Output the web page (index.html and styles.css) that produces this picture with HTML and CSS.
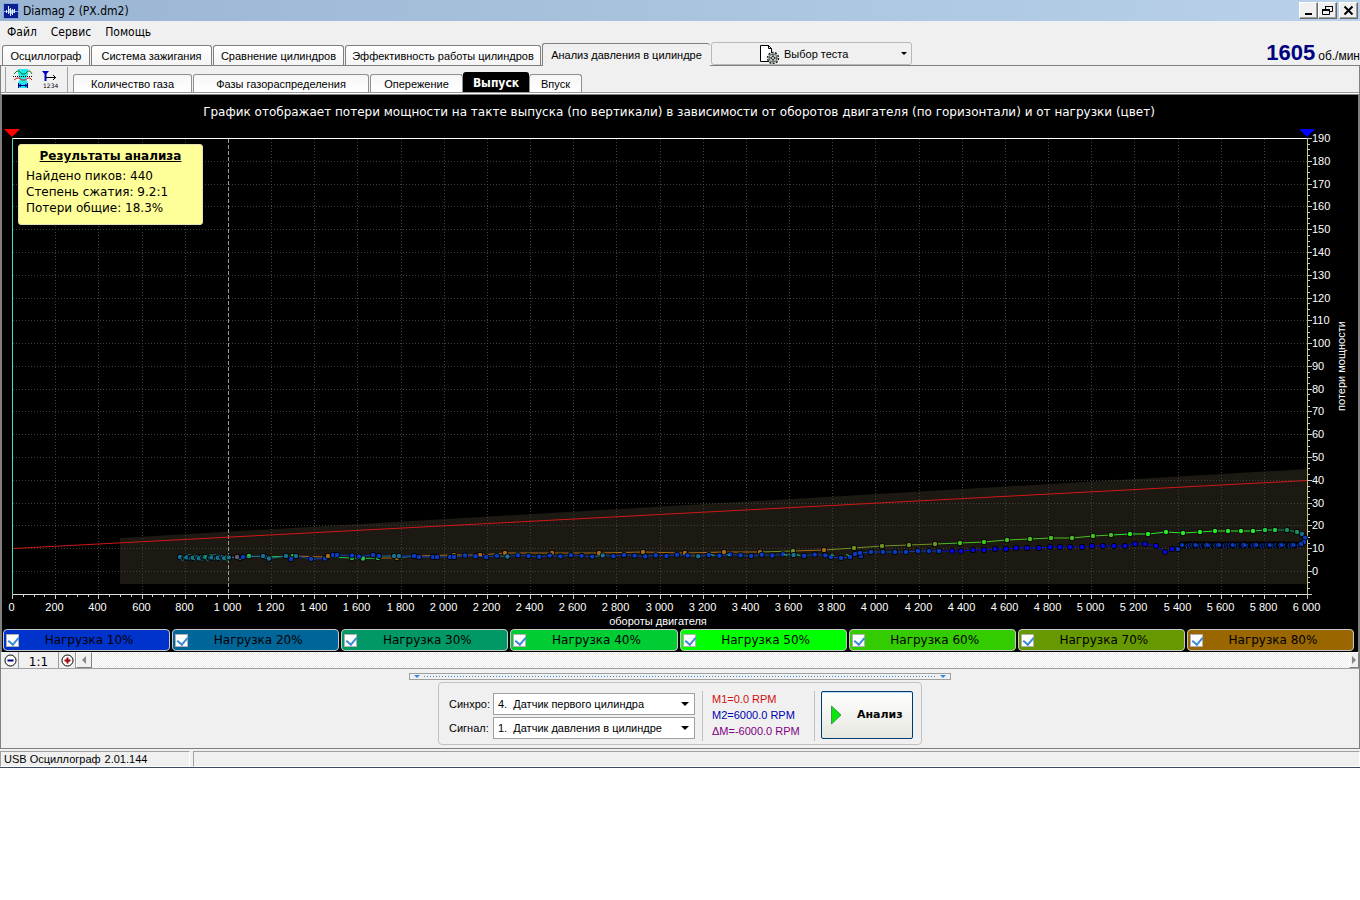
FILE: index.html
```html
<!DOCTYPE html>
<html lang="ru">
<head>
<meta charset="utf-8">
<title>Diamag 2 (PX.dm2)</title>
<link rel="stylesheet" href="styles.css">
</head>
<body>
<div class="window">
  <header class="titlebar">
    <svg class="app-icon" width="16" height="16" viewBox="0 0 16 16"><rect width="16" height="16" fill="#7fa4dc"/><rect x="1" y="1" width="14" height="14" fill="#0b1f92"/><path d="M1 8.500h14" stroke="#7fb0ee"/><path d="M3.500 7v3M5.500 3v8M7.500 5v8M9.500 6v6M11.500 6v4" stroke="#e4f0ff"/><path d="M6.500 6v4M8.500 7v4M10.500 7v3" stroke="#8fb8f0"/></svg>
    <h1 class="title">Diamag 2 (PX.dm2)</h1>
    <div class="win-buttons">
      <button class="win-btn" aria-label="Свернуть"><svg width="13" height="13" viewBox="0 0 13 13"><path d="M3 10h7" stroke="#000" stroke-width="2"/></svg></button>
      <button class="win-btn" aria-label="Восстановить"><svg width="13" height="13" viewBox="0 0 13 13"><path d="M4.500 5V2.500h7v5H9M4 2.500h8M1.500 5.500h7v5h-7zM1 5.500h8M1 6.500h8" fill="none" stroke="#000"/></svg></button>
      <button class="win-btn win-close" aria-label="Закрыть"><svg width="13" height="13" viewBox="0 0 13 13"><path d="M2.500 2.500l8 8m0-8l-8 8" stroke="#000" stroke-width="2"/></svg></button>
    </div>
  </header>
  <nav class="menu">
    <a href="#">Файл</a><a href="#">Сервис</a><a href="#">Помощь</a>
  </nav>
  <div class="tabs">
    <button class="tab tab-scope">Осциллограф</button>
    <button class="tab tab-ignition">Система зажигания</button>
    <button class="tab tab-compare">Сравнение цилиндров</button>
    <button class="tab tab-effect">Эффективность работы цилиндров</button>
    <button class="tab tab-pressure selected">Анализ давления в цилиндре</button>
    <button class="test-select">
      <svg width="21" height="20" viewBox="0 0 21 20"><path d="M1.500 1.500h8l3 3v13h-11z" fill="#fff" stroke="#000"/><path d="M9.500 1.500v3h3" fill="none" stroke="#000"/><circle cx="14" cy="14" r="5.500" fill="#c9d2c9" stroke="#222" stroke-width="1.500" stroke-dasharray="2 1.400"/><circle cx="14" cy="14" r="4" fill="#c9d2c9" stroke="#67786f"/><circle cx="14" cy="14" r="1.500" fill="#fff" stroke="#222"/><path d="M14 10v2m0 4v2m-4-4h2m4 0h2" stroke="#333"/></svg>
      <span>Выбор теста</span><i class="caret"></i>
    </button>
    <div class="rpm"><strong>1605</strong><span>об./мин</span></div>
  </div>

  <main class="page">
    <div class="subbar">
      <div class="tools">
        <button class="tool" aria-label="Фазы"><svg width="20" height="20" viewBox="0 0 20 20"><path d="M5 0h10v5l-2 5 2 4v5H5v-5l2-4-2-5z" fill="#20e8e8"/><path d="M1 5l3-3h2l3 3h3l3-3h2l2 3" fill="none" stroke="#137a20"/><path d="M1 11l3-2h2l3 2h3l3-2h2l2 2" fill="none" stroke="#d21a1a"/><path d="M0 7.500h20" stroke="#000" stroke-dasharray="1 1"/><path d="M5.500 14v5M14.500 14v5M6 16.500h8M8 15l-2 1.500L8 18M12 15l2 1.500-2 1.500" fill="none" stroke="#000090"/></svg></button>
        <button class="tool" aria-label="Нумерация"><svg width="18" height="20" viewBox="0 0 18 20"><path d="M1 2h7L5.500 5v7h-2V5z" fill="#0000c8"/><path d="M5 8.500h10M12 6l2.500 2.500L12 11" fill="none" stroke="#000"/><text class="tool-digits" x="2" y="19">1234</text></svg></button>
      </div>
      <button class="subtab sub-gas">Количество газа</button>
      <button class="subtab sub-phase">Фазы газораспределения</button>
      <button class="subtab sub-advance">Опережение</button>
      <button class="subtab sub-exhaust active">Выпуск</button>
      <button class="subtab sub-intake">Впуск</button>
    </div>

    <section class="plot">
      <svg id="chart" class="chart" viewBox="2 95 1356 533" role="img" aria-label="Потери мощности от оборотов двигателя"></svg>
      <aside class="results">
        <h2>Результаты анализа</h2>
        <p>Найдено пиков: 440</p>
        <p>Степень сжатия: 9.2:1</p>
        <p>Потери общие: 18.3%</p>
      </aside>
      <div class="legend">
        <label class="load l10"><input type="checkbox" checked><span>Нагрузка 10%</span></label>
        <label class="load l20"><input type="checkbox" checked><span>Нагрузка 20%</span></label>
        <label class="load l30"><input type="checkbox" checked><span>Нагрузка 30%</span></label>
        <label class="load l40"><input type="checkbox" checked><span>Нагрузка 40%</span></label>
        <label class="load l50"><input type="checkbox" checked><span>Нагрузка 50%</span></label>
        <label class="load l60"><input type="checkbox" checked><span>Нагрузка 60%</span></label>
        <label class="load l70"><input type="checkbox" checked><span>Нагрузка 70%</span></label>
        <label class="load l80"><input type="checkbox" checked><span>Нагрузка 80%</span></label>
      </div>
    </section>

    <div class="zoombar">
      <button class="zoom-btn" aria-label="Уменьшить"><svg width="13" height="13" viewBox="0 0 13 13"><circle cx="6.500" cy="6.500" r="5.500" fill="#fff" stroke="#000"/><path d="M3.500 6.500h6" stroke="#000080" stroke-width="2"/></svg></button>
      <button class="zoom-reset">1:1</button>
      <button class="zoom-btn" aria-label="Увеличить"><svg width="13" height="13" viewBox="0 0 13 13"><circle cx="6.500" cy="6.500" r="5.500" fill="#fff" stroke="#000"/><path d="M3.500 6.500h6M6.500 3.500v6" stroke="#a00000" stroke-width="2"/></svg></button>
      <button class="scroll-btn" aria-label="Влево"><svg width="6" height="8" viewBox="0 0 6 8"><path d="M5 0v8L1 4z" fill="#888"/></svg></button>
      <div class="track"></div>
      <button class="scroll-btn scroll-right" aria-label="Вправо"><svg width="4" height="8" viewBox="0 0 4 8"><path d="M0 0v8l4-4z" fill="#888"/></svg></button>
    </div>

    <div class="bottom">
      <div class="splitter"><i class="mini"></i><i class="dots"></i><i class="mini"></i></div>
      <form class="panel">
        <div class="fields">
          <label for="sync">Синхро:</label>
          <div class="combo"><select id="sync"><option>4.&nbsp; Датчик первого цилиндра</option></select><i class="caret"></i></div>
          <label for="signal">Сигнал:</label>
          <div class="combo"><select id="signal"><option>1.&nbsp; Датчик давления в цилиндре</option></select><i class="caret"></i></div>
        </div>
        <div class="marks">
          <span class="m1">M1=0.0 RPM</span>
          <span class="m2">M2=6000.0 RPM</span>
          <span class="dm">ΔM=-6000.0 RPM</span>
        </div>
        <button type="button" class="analyze"><svg width="11" height="20" viewBox="0 0 11 20"><path d="M.500 1l9.500 9-9.500 9z" fill="#0be50b" stroke="#3a9a4a"/></svg><span>Анализ</span></button>
      </form>
    </div>
  </main>
  <footer class="status"><div class="cell version"><span>USB Осциллограф</span><span>2.01.144</span></div><div class="cell rest"></div></footer>
</div>
<script src="chart.js"></script>
</body>
</html>
```
FILE: styles.css
```css
* { box-sizing: border-box; }
body { margin: 0; background: #fff; color: #000; font: 11px/14px "Liberation Sans", Arial, sans-serif; }
button, select { font: inherit; color: inherit; margin: 0; padding: 0; border-radius: 0; }
svg { display: block; flex: none; }
.window { background: #f0f0f0; border-bottom: 1px solid #3c4a60; overflow: hidden; }

.titlebar { display: flex; align-items: center; height: 21px; padding: 0 2px 0 3px; background: linear-gradient(90deg, #9ab5d3, #b9d1ea); }
.title { flex: 1; margin: 0 0 0 4px; font: 12px/16px "DejaVu Sans Condensed", "DejaVu Sans", sans-serif; }
.win-buttons { display: flex; }
.win-btn { display: grid; place-items: center; width: 19px; height: 17px; background: #f0f0f0; border: 1px solid; border-color: #fff #696969 #696969 #fff; box-shadow: inset -1px -1px #a0a0a0; }
.win-close { margin-left: 2px; }

.menu { display: flex; gap: 14px; height: 22px; padding: 0 7px; align-items: center; font: 12px/16px "DejaVu Sans Condensed", "DejaVu Sans", sans-serif; }
.menu a { color: #000; text-decoration: none; }

.tabs { display: flex; align-items: flex-end; height: 22px; padding-left: 2px; gap: 1px; }
.tab { height: 20px; background: linear-gradient(#fff, #f4f4f4); border: 1px solid #808080; border-bottom: 0; border-radius: 3px 3px 0 0; white-space: nowrap; }
.tab-scope { width: 88px; }
.tab-ignition { width: 121px; }
.tab-compare { width: 131px; }
.tab-effect { width: 196px; }
.tab-pressure { width: 168px; }
.tab.selected { height: 23px; margin-bottom: -1px; background: #f0f0f0; border-right: 0; position: relative; z-index: 1; }
.test-select { display: flex; align-items: center; width: 201px; height: 23px; padding: 0 4px 0 47px; gap: 4px; background: #f0f0f0; border: 1px solid #b8b8b8; border-radius: 3px; }
.caret { margin-left: auto; width: 0; height: 0; border: 3px solid transparent; border-top: 3px solid #000; border-bottom: 0; }
.rpm { display: flex; align-items: baseline; gap: 3px; height: 22px; margin-left: auto; font-size: 12px; line-height: 20px; white-space: nowrap; }
.rpm strong { font-size: 22px; color: #000080; }

.page { border: 1px solid #808080; }
.subbar { display: flex; align-items: flex-end; height: 29px; padding-left: 4px; border-bottom: 1px solid #808080; background: linear-gradient(#f0f0f0 26px, #999 26px, #999 27px, #fff 27px); padding-bottom: 2px; }
.tools { display: flex; gap: 8px; align-items: flex-start; width: 63px; height: 25px; margin-right: 5px; padding: 2px 0 0 7px; border: solid #a0a0a0; border-width: 0 1px; }
.tool { border: 0; background: none; }
.tool-digits { font: 6px "DejaVu Sans", sans-serif; }
.subtab { height: 18px; margin-right: 1px; background: linear-gradient(#f6f6f6, #fff); border: 1px solid #909090; border-bottom: 0; border-radius: 3px 3px 0 0; white-space: nowrap; }
.sub-gas { width: 119px; }
.sub-phase { width: 176px; }
.sub-advance { width: 93px; margin-right: 0; }
.sub-exhaust { width: 66px; margin-right: 0; }
.sub-intake { width: 53px; }
.subtab.active { height: 20px; background: #000; color: #fff; border-color: #000; font: bold 12px/16px "DejaVu Sans Condensed", sans-serif; }

.plot { position: relative; background: #000; border-left: 1px solid #808080; border-right: 1px solid #808080; padding-bottom: 1px; }
.chart { width: 100%; height: auto; }
.chart text { fill: #fff; font: 11px "Liberation Sans", sans-serif; }
.chart .chart-title { font: 12px "DejaVu Sans", sans-serif; }
.mid { text-anchor: middle; }
.grid { stroke: #404040; stroke-dasharray: 1 2; }
.results { position: absolute; left: 16px; top: 49px; width: 185px; height: 81px; padding: 3px 7px; background: #ffff99; border: 1px solid #e4e4b0; border-radius: 3px; font: 12px/16px "DejaVu Sans", sans-serif; white-space: nowrap; }
.results h2 { margin: 0 0 4px; font-size: 12px; line-height: 16px; text-align: center; text-decoration: underline; }
.results p { margin: 0; }
.legend { display: grid; grid-template-columns: repeat(8, 1fr); gap: 2px; padding: 1px 4px 0 1px; }
.load { display: flex; align-items: center; height: 22px; padding: 0 10px 0 2px; border: 1px solid #c8c8c8; border-radius: 4px; font: 12px/16px "DejaVu Sans", sans-serif; }
.load span { flex: 1; text-align: center; white-space: nowrap; }
.load input { appearance: none; position: relative; width: 13px; height: 13px; margin: 0; background: #fff; border: 1px solid #b0b0b0; }
.load input:checked::after { content: ""; position: absolute; left: 3px; top: 0; width: 5px; height: 8px; border: solid #3a8ad8; border-width: 0 2px 2px 0; transform: rotate(40deg); }
.l10 { background: #0033cc; }
.l20 { background: #006699; }
.l30 { background: #009966; }
.l40 { background: #00cc33; }
.l50 { background: #00ff00; }
.l60 { background: #33cc00; }
.l70 { background: #669900; }
.l80 { background: #996600; }

.zoombar { display: flex; height: 17px; border-bottom: 1px solid #a0a0a0; padding-left: 1px; }
.zoom-btn { display: grid; place-items: center; width: 17px; background: #f0f0f0; border: solid #999; border-width: 0 1px 0 0; }
.zoom-reset { width: 40px; background: #f0f0f0; border: solid #999; border-width: 0 1px 0 0; font: 12px/16px "DejaVu Sans", sans-serif; padding-top: 2px; }
.scroll-btn { display: grid; place-items: center; width: 16px; background: #f0f0f0; border: 1px solid; border-color: #fff #808080 #808080 #fff; }
.scroll-right { width: 10px; }
.track { flex: 1; background: repeating-conic-gradient(#ececec 0 25%, #fff 0 50%) 0 0 / 2px 2px; }

.bottom { display: flex; flex-direction: column; align-items: center; gap: 2px; padding: 4px 0 3px; }
.splitter { display: flex; align-items: center; gap: 4px; width: 542px; height: 7px; padding: 0 4px; border: 1px solid #a0a0a0; }
.mini { border: 3px solid transparent; border-top-color: #3a8ad8; border-bottom: 0; }
.dots { flex: 1; height: 1px; background: repeating-linear-gradient(90deg, #3a8ad8 0 1px, transparent 1px 3px); }
.panel { display: flex; align-items: center; width: 484px; height: 63px; padding: 4px 8px 0 10px; border: 1px solid #c0c0c0; border-radius: 4px; }
.fields { display: grid; grid-template-columns: 44px 202px; row-gap: 2px; align-items: center; }
.combo { position: relative; height: 22px; }
.combo select { appearance: none; width: 100%; height: 22px; padding: 0 20px 0 4px; background: #fff; border: 1px solid #a0a0a0; }
.combo .caret { position: absolute; right: 6px; top: 9px; border-width: 4px 4px 0; pointer-events: none; }
.marks { display: flex; flex-direction: column; width: 113px; height: 50px; margin-left: 7px; padding-left: 9px; border: solid #c0c0c0; border-width: 0 1px; line-height: 16px; white-space: nowrap; }
.m1 { color: #d01010; }
.m2 { color: #0000b0; }
.dm { color: #800080; }
.analyze { display: flex; align-items: center; gap: 15px; width: 92px; height: 48px; margin: 0 0 2px auto; padding-left: 9px; border: 1px solid #003c74; border-radius: 2px; background: linear-gradient(#fff, #e6e6e0); box-shadow: inset 0 1px #bcd8f4; font: bold 11px/14px "DejaVu Sans", sans-serif; }

.status { display: flex; gap: 3px; height: 18px; padding-top: 2px; }
.cell { border: 1px solid; border-color: #a0a0a0 #fff #fff #a0a0a0; }
.version { display: flex; gap: 4px; width: 190px; padding-left: 3px; align-items: center; white-space: nowrap; }
.rest { flex: 1; }
```
FILE: chart.js
```js
const svg = document.getElementById('chart');
const out = [];
const X = v => Math.round(12 + v * 1295 / 6000) + 0.5;
const Y = v => Math.round(571 - v * 433 / 190) + 0.5;
const line = (x1, y1, x2, y2, stroke, extra = '') =>
  out.push(`<line x1="${x1}" y1="${y1}" x2="${x2}" y2="${y2}" stroke="${stroke}" ${extra}/>`);
const text = (x, y, s, cls = '', extra = '') =>
  out.push(`<text x="${x}" y="${y}" class="${cls}" ${extra}>${s}</text>`);

text(679, 116, 'График отображает потери мощности на такте выпуска (по вертикали) в зависимости от оборотов двигателя (по горизонтали) и от нагрузки (цвет)', 'chart-title mid');

// Tolerance band
out.push('<path d="M120 538L1307 469V584H120z" fill="#1c1812"/>');

// Grid, ticks and labels
for (let v = 0; v <= 6000; v += 50) {
  const major = v % 200 === 0;
  line(X(v), 595, X(v), major ? 599 : 597, '#ccc');
  if (!major) continue;
  if (v > 0 && v < 6000 && v !== 1000) out.push(`<line class="grid" x1="${X(v)}" y1="139" x2="${X(v)}" y2="594"/>`);
  text(X(v) - 1, 611, v < 1000 ? v : (v / 1000 | 0) + ' ' + String(v % 1000).padStart(3, '0'), 'mid');
}
for (let v = -10; v <= 190; v += 2.5) {
  const major = v % 10 === 0;
  line(1308, Y(v), major ? 1312 : 1310, Y(v), '#ccc');
  if (!major || v < 0) continue;
  if (v < 190) out.push(`<line class="grid" x1="13" y1="${Y(v)}" x2="1307" y2="${Y(v)}"/>`);
  text(1312, Y(v) + 3.5, v);
}
line(228.5, 139, 228.5, 594, '#999', 'stroke-dasharray="4 2"');
line(12, 138.5, 1308, 138.5, '#fff');
line(12, 594.5, 1308, 594.5, '#ddd');
line(12.5, 138, 12.5, 595, '#50d8d0');
line(1307.5, 138, 1307.5, 595, '#c8c880');
out.push('<path d="M4 129h16l-8 8z" fill="#f00"/><path d="M1299 129h16l-8 8z" fill="#00f"/>');
line(13, 548.5, 1307, 480.5, '#d01818');

// Measured series: [x, y, colour]
const B = '#0a3cc0', D = '#0808d8', T = '#1a7090', G = '#20c848', S = '#169060', R = '#a46a18', O = '#729020', L = '#48c020', E = '#28e828';
function dot(x, y, fill) {
  out.push(`<circle cx="${x}" cy="${y}" r="3" fill="#000"/><circle cx="${x}" cy="${y}" r="2.2" fill="${fill}"/>`);
}
function series(points) {
  for (let i = 1; i < points.length; i++) {
    const a = points[i - 1], b = points[i];
    line(a[0], a[1], b[0], b[1], b[2]);
  }
  for (const p of points) dot(p[0], p[1], p[2]);
}
series([[200, 557, T], [211, 556, G], [240, 558, T], [249, 556, G], [265, 557, T], [293, 556, G], [327, 557, R], [352, 558, G], [363, 558.5, G], [378, 558, G], [397, 558, R], [415, 556, T], [454, 555, R], [480, 555, R], [505, 553, R], [552, 553, R], [599, 553, R], [643, 552, R], [685, 553, R], [724, 552, R], [760, 552, R], [793, 551, O], [824, 550, R], [854, 548, O], [882, 546, O], [909, 545, O], [935, 544, O], [960, 543, L], [984, 542, L], [1007, 540, L], [1030, 539, L], [1051, 538, L], [1072, 538, L], [1093, 536, L], [1111, 535, L], [1130, 534, E], [1148, 534, E], [1166, 532, E], [1183, 533, E], [1200, 532, E], [1215, 531, E], [1228, 531, E], [1241, 531, E], [1253, 531, E], [1265, 530, G], [1275, 530, G], [1287, 530, S], [1297, 532, S], [1302, 534, T], [1305, 538, B], [1304, 542, B], [1301, 544, B]]);

const low = [[229, 557.5, B], [237, 557, '#606078'], [243, 557, B], [263, 556, T], [269, 558.5, T], [286, 556, T], [291, 559, B], [296, 556, T], [311, 559, B], [325, 558.5, B], [328, 556, R], [333, 555, B], [337, 555, B], [352, 555.5, B], [359, 556.5, B], [373, 555, B], [379, 556, B], [394, 556, T], [399, 556, T], [414, 556, B], [419, 557, B], [433, 557, B], [437, 557, B], [450, 557, B], [454, 557, B]];
for (let i = 0; i < 35; i++) low.push([465 + i * 10.6, 555.5 + (i * 7 % 5) * 0.4 - i * 0.04, i % 9 === 4 ? T : B]);
low.push([831, 557, B], [841, 558, B], [850, 557, B], [855, 554, B], [861, 556, B], [860, 553, B]);
for (const x of [871, 883, 895, 906]) low.push([x, 552, B]);
for (const x of [918, 929, 939, 952, 961]) low.push([x, 551, x > 945 ? D : B]);
low.push([973, 550, D], [984, 550, D], [995, 549, D], [1006, 549, D], [1016, 548, D], [1027, 548, D], [1039, 548, D]);
for (const x of [1050, 1060, 1070, 1082]) low.push([x, 547, D]);
for (const x of [1092, 1103, 1114, 1125]) low.push([x, 546, D]);
low.push([1135, 544, D], [1145, 544, D], [1156, 546, D], [1165, 552, D], [1172, 549, D], [1178, 549, B]);
series(low);
for (const x of [711, 727, 784, 797, 831, 846]) line(x, 554.5, x + 3, 555.5, G);

for (let i = 0; i < 24; i++) {
  const x = 180 + i * 2.1 + (i * 5 % 3) * 0.6, y = 557 + (i * 3 % 4) * 0.4, c = i % 5 === 2 ? S : T;
  if (i % 3 === 1) out.push(`<circle cx="${x}" cy="${y}" r="2.5" fill="#000" stroke="${c}"/>`);
  else dot(x, y, c);
}
// Tightly packed samples near the top of the speed range
out.push('<path d="M1182 545H1296" stroke="#000" stroke-width="7" stroke-linecap="round"/>');
for (let i = 0; i < 38; i++) {
  const x = 1182 + i * 3.1 + (i * 5 % 3) * 0.5, y = 545 + (i * 3 % 4) * 0.3;
  out.push(i % 4 === 0 ? `<circle cx="${x}" cy="${y}" r="2" fill="${B}"/>` : `<path d="M${x + 1} ${y - 2.5}q-3 2.500 0 5" fill="none" stroke="${B}"/>`);
}

text(658, 625, 'обороты двигателя', 'mid');
text(0, 0, 'потери мощности', 'mid', 'transform="translate(1345 366) rotate(-90)"');
svg.innerHTML = out.join('');
```
